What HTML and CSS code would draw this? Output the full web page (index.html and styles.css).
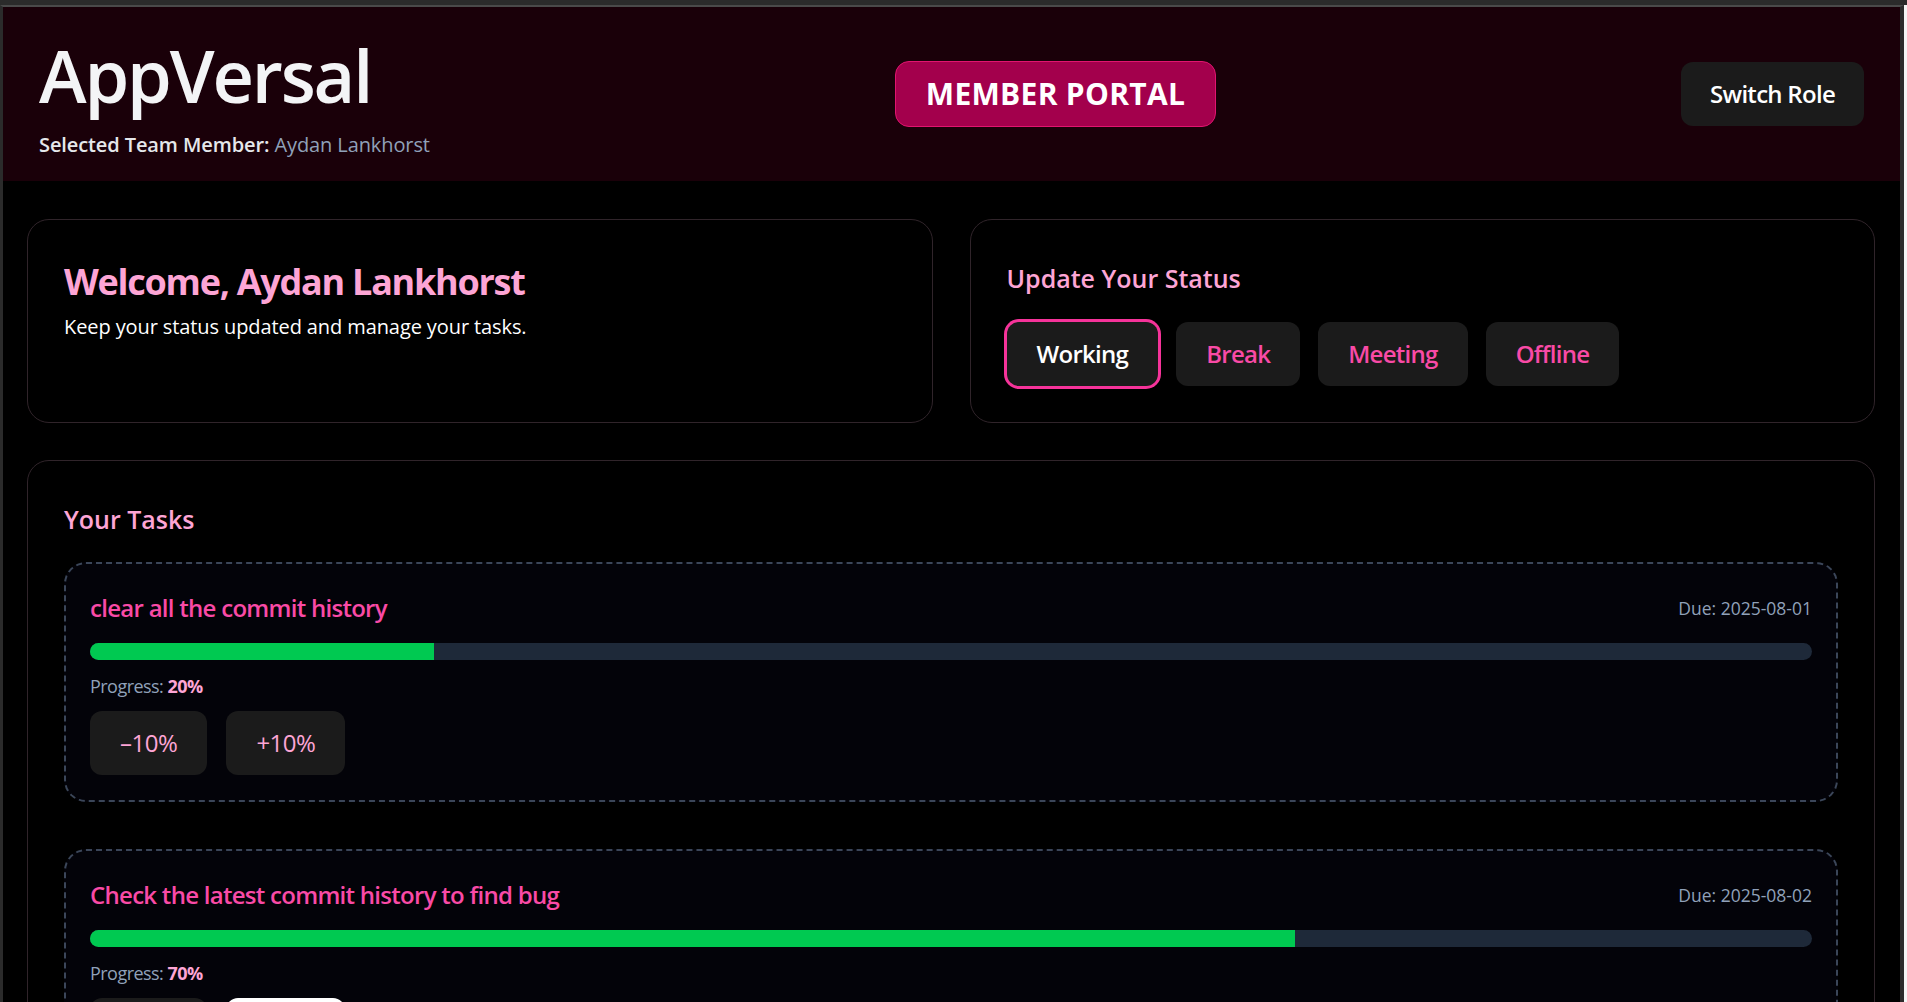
FILE: index.html
```html
<!DOCTYPE html>
<html lang="en">
<head>
<meta charset="utf-8">
<title>AppVersal – Member Portal</title>
<link rel="stylesheet" href="styles.css">
</head>
<body>
<div class="window">
  <header class="topbar">
    <div class="brand">
      <h1 class="brand-title">AppVersal</h1>
      <p class="brand-member"><span class="brand-label">Selected Team Member:</span> <span class="brand-name">Aydan Lankhorst</span></p>
    </div>
    <div class="portal-badge">MEMBER PORTAL</div>
    <button class="btn btn-switch" type="button">Switch Role</button>
  </header>

  <main class="content">
    <div class="top-row">
      <section class="card welcome">
        <h2 class="welcome-title">Welcome, Aydan Lankhorst</h2>
        <p class="welcome-text">Keep your status updated and manage your tasks.</p>
      </section>
      <section class="card status">
        <h3 class="card-title">Update Your Status</h3>
        <div class="status-list">
          <button class="btn btn-status is-active" type="button">Working</button>
          <button class="btn btn-status" type="button">Break</button>
          <button class="btn btn-status" type="button">Meeting</button>
          <button class="btn btn-status" type="button">Offline</button>
        </div>
      </section>
    </div>

    <section class="card tasks">
      <h3 class="card-title tasks-title">Your Tasks</h3>
      <div class="task-list">
        <article class="task">
          <div class="task-head">
            <h4 class="task-name">clear all the commit history</h4>
            <span class="task-due">Due: 2025-08-01</span>
          </div>
          <div class="bar"><div class="bar-fill" style="width:20%"></div></div>
          <p class="task-progress">Progress: <strong>20%</strong></p>
          <div class="task-actions">
            <button class="btn btn-step" type="button">–10%</button>
            <button class="btn btn-step" type="button">+10%</button>
          </div>
        </article>
        <article class="task">
          <div class="task-head">
            <h4 class="task-name">Check the latest commit history to find bug</h4>
            <span class="task-due">Due: 2025-08-02</span>
          </div>
          <div class="bar"><div class="bar-fill" style="width:70%"></div></div>
          <p class="task-progress">Progress: <strong>70%</strong></p>
          <div class="task-actions">
            <button class="btn btn-step" type="button">–10%</button>
            <button class="btn btn-step is-hover" type="button">+10%</button>
          </div>
        </article>
      </div>
    </section>
  </main>
</div>
</body>
</html>
```

FILE: styles.css
```css
:root {
  --font: "Open Sans", "Noto Sans", "DejaVu Sans", sans-serif;
  --pink-300: #fda5d5;
  --pink-400: #f94aa6;
  --pink-500: #f6339a;
  --slate-400: #90a1b9;
  --btn-bg: #1b1b1b;
}

* { box-sizing: border-box; }

html, body {
  margin: 0;
  padding: 0;
  overflow: hidden;
}

body {
  background: #f4f4f4;
  border-top: 5px solid #2b2b2b;
  font-family: var(--font);
  color: #fff;
}

.window {
  margin-right: 3px;
  min-height: 100vh;
  background: #000;
  border-top: 2px solid #4a4a4a;
  border-left: 3px solid #2b2b2b;
  border-right: 4px solid #2b2b2b;
}

/* ---------- Header ---------- */
.topbar {
  height: 174px;
  padding: 0 36px;
  background: #1a0009;
  display: flex;
  align-items: center;
  justify-content: space-between;
}

.brand { margin-top: 10px; }

.brand-title {
  margin: 0;
  font-size: 72px;
  line-height: 72px;
  font-weight: 600;
  color: #f3f4f6;
  letter-spacing: -0.03em;
}

.brand-member {
  margin: 20px 0 0;
  font-size: 20px;
  line-height: 28px;
  letter-spacing: -0.005em;
}

.brand-label { font-weight: 600; color: #e5e7eb; }
.brand-name { color: var(--slate-400); }

.portal-badge {
  padding: 14px 30px;
  border: 1px solid #e0156f;
  border-radius: 14px;
  background: #a3004c;
  color: #fff;
  font-size: 30px;
  line-height: 36px;
  font-weight: 700;
  letter-spacing: 0.01em;
}

.btn {
  font-family: var(--font);
  border: 0;
  cursor: pointer;
}

.btn-switch {
  padding: 16px 29px;
  border-radius: 12px;
  background: var(--btn-bg);
  color: #fff;
  font-size: 24px;
  line-height: 32px;
  font-weight: 600;
  letter-spacing: -0.03em;
}

/* ---------- Content ---------- */
.content {
  padding: 38px 25px 0 24px;
  display: flex;
  flex-direction: column;
  gap: 37px;
}

.top-row {
  display: grid;
  grid-template-columns: 1fr 1fr;
  gap: 37px;
}

.card {
  border: 1px solid #30242a;
  border-radius: 22px;
  background: #000;
  padding: 42px 36px 36px;
}

.welcome-title {
  margin: 0;
  font-size: 36px;
  line-height: 40px;
  font-weight: 700;
  color: var(--pink-300);
  letter-spacing: -0.035em;
}

.welcome-text {
  margin: 11px 0 0;
  font-size: 20px;
  line-height: 28px;
  color: #fff;
  letter-spacing: -0.005em;
}

.card-title {
  margin: 0 0 28px;
  font-size: 25px;
  line-height: 32px;
  font-weight: 600;
  color: var(--pink-300);
}

.status-list {
  display: flex;
  gap: 18px;
}

.btn-status {
  padding: 16px 30px;
  border-radius: 12px;
  background: var(--btn-bg);
  color: var(--pink-400);
  font-size: 24px;
  line-height: 32px;
  font-weight: 600;
  letter-spacing: -0.03em;
}

.btn-status.is-active {
  color: #fff;
  box-shadow: 0 0 0 3px var(--pink-500);
}

/* ---------- Tasks ---------- */
.tasks-title { margin-bottom: 27px; }

.task-list {
  display: flex;
  flex-direction: column;
  gap: 47px;
}

.task {
  border: 2px dashed #3b4659;
  border-radius: 22px;
  background: #030309;
  padding: 28px 24px 25px;
}

.task-head {
  display: flex;
  justify-content: space-between;
  align-items: center;
}

.task-name {
  margin: 0;
  font-size: 24px;
  line-height: 32px;
  font-weight: 600;
  color: var(--pink-400);
  letter-spacing: -0.03em;
}

.task-due {
  font-size: 17.5px;
  line-height: 24px;
  color: var(--slate-400);
}

.bar {
  margin-top: 19px;
  height: 17px;
  border-radius: 999px;
  background: #1e2939;
  overflow: hidden;
}

.bar-fill {
  height: 100%;
  background: #00c951;
}

.task-progress {
  margin: 12px 0 0;
  font-size: 18px;
  line-height: 28px;
  color: var(--slate-400);
  letter-spacing: -0.03em;
}

.task-progress strong {
  color: var(--pink-300);
  font-weight: 700;
}

.task-actions {
  margin-top: 11px;
  display: flex;
  gap: 19px;
}

.btn-step {
  padding: 16px 30px;
  border-radius: 12px;
  background: var(--btn-bg);
  color: var(--pink-300);
  font-size: 24px;
  line-height: 32px;
  font-weight: 500;
  letter-spacing: -0.02em;
}

.btn-step.is-hover {
  background: #fff;
}
```
